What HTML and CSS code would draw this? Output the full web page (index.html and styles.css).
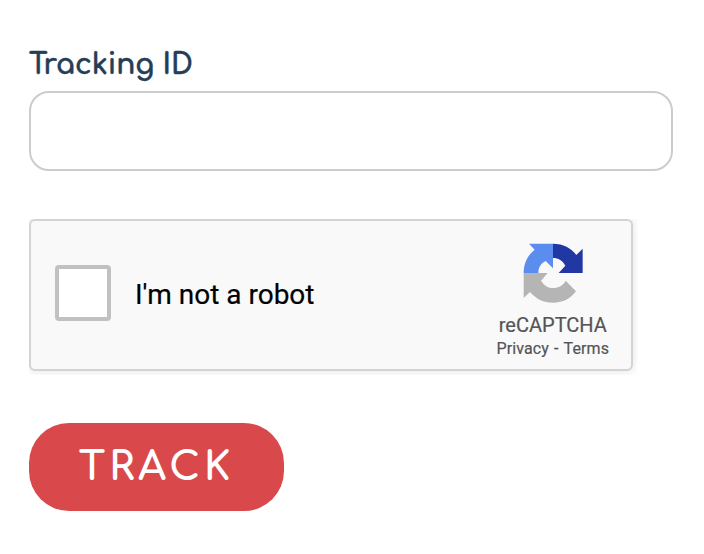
FILE: index.html
```html
<!DOCTYPE html>
<html lang="en">
	<head>
		<meta charset="utf-8">
		<title>Track</title>
		<meta name="viewport" content="width=device-width, initial-scale=1">
		<link rel="stylesheet" href="styles.css">
	</head>
	<body>
		<form class="track-form">
			<label for="trackingId">Tracking ID</label>
			<input type="text" id="trackingId" class="tracking-input">
			<div class="captcha-frame">
				<div class="captcha">
					<button type="button" class="captcha-checkbox" aria-label="I'm not a robot"></button>
					<span class="captcha-label">I'm not a robot</span>
					<div class="captcha-brand">
						<svg class="captcha-logo" viewBox="63 33 192 192">
							<path fill="#b5b5b5" d="M71 129H143L123 152C134 168 145 174 159 174C176 174 190 166 197 152L228 184C212 206 190 218 159 218C130 218 108 207 90 186L71 204Z"/>
							<path fill="#5b8def" d="M87 41H159V115L137 93C123 100 115 112 115 129H71C71 102 82 76 104 59Z"/>
							<path fill="#2138a4" d="M159 41C190 41 213 54 229 75L248 56V129H176L196 107C188 92 175 84 159 84Z"/>
						</svg>
						<div class="captcha-name">reCAPTCHA</div>
						<div class="captcha-links">Privacy<span>-</span>Terms</div>
					</div>
				</div>
			</div>
			<button type="submit" class="track-button">TRACK</button>
		</form>
	</body>
</html>
```
FILE: styles.css
```css
* {
	box-sizing: border-box;
}

body {
	margin: 0;
	background-color: #fff;
}

.track-form {
	display: flex;
	flex-direction: column;
	align-items: flex-start;
	padding: 43px 31px 0px 29px;
}

label {
	height: 48px;
	line-height: 44px;
	font-family: Comfortaa, Quicksand, Lato, sans-serif;
	font-size: 28px;
	font-weight: 700;
	color: #253d57;
	-webkit-text-stroke: 0.4px #253d57;
}

.tracking-input {
	width: 100%;
	height: 80px;
	padding: 0px 20px;
	border: 2px solid #ccc;
	border-radius: 20px;
	font-size: 30px;
	outline: none;
}

.captcha-frame {
	width: 608px;
	height: 156px;
	margin: 48px 0px;
	overflow: hidden;
}

.captcha {
	display: flex;
	align-items: center;
	width: 604px;
	height: 152px;
	padding: 0px 22px 0px 24px;
	border: 2px solid #d3d3d3;
	border-radius: 6px;
	background-color: #f9f9f9;
	box-shadow: 0px 0px 8px 2px rgba(0, 0, 0, 0.08);
	font-family: Roboto, Arial, sans-serif;
}

.captcha-checkbox {
	width: 56px;
	height: 56px;
	margin: 0px 24px 4px 0px;
	border: 4px solid #c1c1c1;
	border-radius: 4px;
	background-color: #fff;
}

.captcha-label {
	margin-bottom: 2px;
	font-size: 28px;
	color: #000;
	-webkit-text-stroke: 0.2px #000;
}

.captcha-brand {
	display: flex;
	flex-direction: column;
	align-items: center;
	align-self: flex-start;
	margin: 20px 0px 0px auto;
	color: #555;
	-webkit-text-stroke: 0.2px #555;
}

.captcha-logo {
	width: 64px;
	height: 64px;
}

.captcha-name {
	margin-top: 8px;
	font-size: 20px;
	line-height: 24px;
}

.captcha-links {
	font-size: 16px;
	line-height: 24px;
	letter-spacing: 0.1px;
}

.captcha-links span {
	margin: 0px 5px;
}

.track-button {
	width: 255px;
	height: 88px;
	padding: 0px;
	border: none;
	border-radius: 40px;
	background-color: #d9494c;
	font-family: Comfortaa, Quicksand, Lato, sans-serif;
	font-size: 40px;
	font-weight: 700;
	letter-spacing: 3.7px;
	color: #fff;
}
```
